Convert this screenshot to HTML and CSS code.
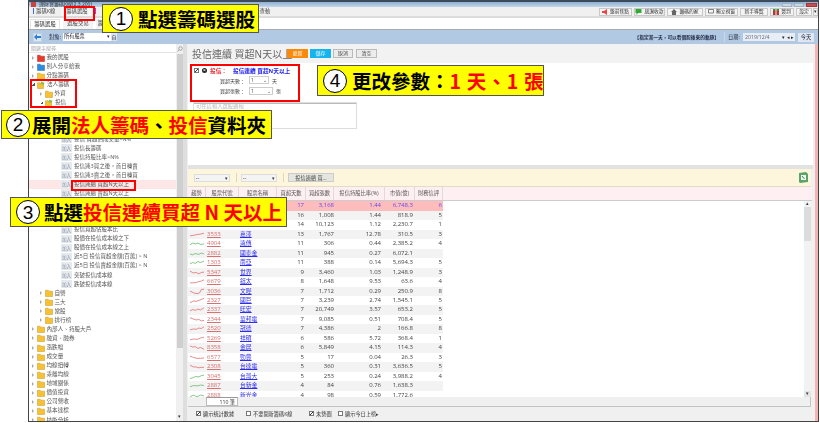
FILE: index.html
```html
<!DOCTYPE html>
<html lang="zh-Hant">
<head>
<meta charset="utf-8">
<title>籌碼選股</title>
<link rel="stylesheet" href="styles.css">
</head>
<body>
<svg class="defs" width="0" height="0">
  <symbol id="folder" viewBox="0 0 8 8"><path d="M.5 1.2h2.6l.8 1h3.6v5.3H.5z" fill="#f6c232" stroke="#c9952a" stroke-width=".5"/></symbol>
  <symbol id="openf" viewBox="0 0 8 8"><path d="M.5 1.8h2.4l.7.9h2.9v4.8H.5z" fill="#f6c232" stroke="#c9952a" stroke-width=".5"/><path d="M4 .5l3.5 1.2-1 2.4L3.4 3z" fill="#8cc152"/></symbol>
  <symbol id="redf" viewBox="0 0 8 8"><path d="M.5 1.2h2.6l.8 1h3.6v5.3H.5z" fill="#e8392c" stroke="#b52a20" stroke-width=".5"/></symbol>
  <symbol id="bluef" viewBox="0 0 8 8"><path d="M.5 1.2h2.6l.8 1h3.6v5.3H.5z" fill="#2f8be0" stroke="#2468a8" stroke-width=".5"/></symbol>
</svg>

<div class="window">
  <div class="titlebar">
    <i class="appicon"></i><span class="apptitle">理財寶籌碼K線(2.3.200)</span>
    <span class="winctl"><i class="wc"></i><i class="wc"></i><i class="wc close"></i></span>
  </div>

  <div class="tabs1">
    <span class="tab1"><b class="tick blue"></b>籌碼K線</span>
    <span class="tab1 on">籌碼選股</span>
    <span class="tab1 p"><b class="tick purple"></b></span>
    <span class="tab1 far">查動</span>
    <span class="spacer"></span>
    <span class="topbtn w32"><svg width="6" height="6" viewBox="0 0 6 6"><path d="M0 2h2l3-2v6L2 4H0z" fill="#e44"/></svg>盤前焦點</span>
    <span class="topbtn w31"><svg width="7" height="6" viewBox="0 0 7 6"><path d="M.5 0h6v4H3L1.500 6V4h-1z" fill="#3a3"/></svg>感謝收款</span>
    <span class="topbtn w36"><svg width="6" height="6" viewBox="0 0 6 6"><path d="M3 0l3 3H5v3H1V3H0z" fill="#666"/></svg>籌碼的家</span>
    <span class="topbtn w33"><svg width="6" height="5" viewBox="0 0 6 5"><path d="M.5.5h5v3.500h-5z" fill="none" stroke="#555" stroke-width=".7"/></svg>獨立視窗</span>
    <span class="topbtn w28">新手導覽</span>
    <span class="topbtn w23"><svg width="6" height="7" viewBox="0 0 6 7"><path d="M0 2h6v5H0z" fill="#b33"/><path d="M0 1h6v1.500H0z" fill="#393"/><path d="M2.500 1h1v6h-1z" fill="#eee"/></svg>簽到</span>
    <span class="topbtn w17">設定</span>
    <span class="topbtn w5">▾</span>
  </div>

  <div class="tabs2">
    <span class="tab2 on">籌碼選股</span>
    <span class="tab2">選股交易</span>
    <span class="tab2 short">籌碼</span>
  </div>

  <div class="bluebar">
    <span class="backbtn"><svg width="7" height="6" viewBox="0 0 7 6"><path d="M0 3l3-3v2h4v2H3v2z" fill="#2b7fd0"/></svg></span>
    <span class="lbl target">對象:</span>
    <span class="sel target-sel">所有股票<i>▾</i></span>
    <span class="selbtn">自</span>
    <span class="spacer"></span>
    <span class="hint">【指定某一天，可以看個股後來的軌跡】</span>
    <span class="vline"></span>
    <span class="lbl date">日期:</span>
    <span class="dateinput">2019/12/4<i>▾ ◂ ▸</i></span>
    <span class="today">今天</span>
  </div>

  <div class="body">
    <aside class="left">
      <div class="search"><span>關鍵字搜尋</span></div>
      <div class="searchicon"><svg width="6" height="6" viewBox="0 0 6 6"><circle cx="3.500" cy="2.500" r="1.800" fill="none" stroke="#888" stroke-width=".7"/><path d="M2 4L.5 5.500" stroke="#888" stroke-width=".7"/></svg></div>
      <div class="tree">
        <div class="t l0"><i class="arr"></i><svg class="fo"><use href="#redf"/></svg>我的選股</div>
        <div class="t l0"><i class="arr"></i><svg class="fo"><use href="#bluef"/></svg>別人分享給我</div>
        <div class="t l0"><i class="arr"></i><svg class="fo"><use href="#folder"/></svg>分點籌碼</div>
        <div class="t l0"><i class="arr open"></i><svg class="fo"><use href="#openf"/></svg>法人籌碼</div>
        <div class="t l1"><i class="arr"></i><svg class="fo"><use href="#folder"/></svg>外資</div>
        <div class="t l1"><i class="arr open"></i><svg class="fo"><use href="#openf"/></svg>投信</div>
        <div class="t"></div>
        <div class="t"></div>
        <div class="t"></div>
        <div class="t l2"><span class="add">加入</span>投信 買超佔成交量&gt;N%</div>
        <div class="t l2"><span class="add">加入</span>投信長籌碼</div>
        <div class="t l2"><span class="add">加入</span>投信持股比率&gt;N%</div>
        <div class="t l2"><span class="add">加入</span>投信連3買之後，首日轉賣</div>
        <div class="t l2"><span class="add">加入</span>投信連3賣之後，首日轉買</div>
        <div class="t l2 picked"><span class="add">加入</span>投信連續 買超N天以上</div>
        <div class="t l2"><span class="add">加入</span>投信連續 賣超N天以上</div>
        <div class="t"></div>
        <div class="t"></div>
        <div class="t"></div>
        <div class="t l2"><span class="add">加入</span>投信買超佔股本比</div>
        <div class="t l2"><span class="add">加入</span>股價在投信成本線之下</div>
        <div class="t l2"><span class="add">加入</span>股價在投信成本線之上</div>
        <div class="t l2"><span class="add">加入</span>近5日 投信買超金額[百萬] &gt; N</div>
        <div class="t l2"><span class="add">加入</span>近5日 投信賣超金額[百萬] &gt; N</div>
        <div class="t l2"><span class="add">加入</span>突破投信成本線</div>
        <div class="t l2"><span class="add">加入</span>跌破投信成本線</div>
        <div class="t l1"><i class="arr"></i><svg class="fo"><use href="#folder"/></svg>自營</div>
        <div class="t l1"><i class="arr"></i><svg class="fo"><use href="#folder"/></svg>三大</div>
        <div class="t l1"><i class="arr"></i><svg class="fo"><use href="#folder"/></svg>當股</div>
        <div class="t l1"><i class="arr"></i><svg class="fo"><use href="#folder"/></svg>排行榜</div>
        <div class="t l0"><i class="arr"></i><svg class="fo"><use href="#folder"/></svg>內部人、持股大戶</div>
        <div class="t l0"><i class="arr"></i><svg class="fo"><use href="#folder"/></svg>融資、融券</div>
        <div class="t l0"><i class="arr"></i><svg class="fo"><use href="#folder"/></svg>漲跌幅</div>
        <div class="t l0"><i class="arr"></i><svg class="fo"><use href="#folder"/></svg>成交量</div>
        <div class="t l0"><i class="arr"></i><svg class="fo"><use href="#folder"/></svg>均線扭轉</div>
        <div class="t l0"><i class="arr"></i><svg class="fo"><use href="#folder"/></svg>乖離均線</div>
        <div class="t l0"><i class="arr"></i><svg class="fo"><use href="#folder"/></svg>地域關係</div>
        <div class="t l0"><i class="arr"></i><svg class="fo"><use href="#folder"/></svg>價值投資</div>
        <div class="t l0"><i class="arr"></i><svg class="fo"><use href="#folder"/></svg>公司營收</div>
        <div class="t l0"><i class="arr"></i><svg class="fo"><use href="#folder"/></svg>基本達標</div>
        <div class="t l0"><i class="arr"></i><svg class="fo"><use href="#folder"/></svg>技術分析</div>
      </div>
      <div class="vscroll"><b class="thumb"></b><i class="sdown">▾</i></div>
    </aside>
    <div class="splitter"></div>

    <main class="main">
      <div class="head">
        <span class="title">投信連續 買超N天以上</span>
        <span class="hbtn orange">更新</span>
        <span class="hbtn sky">儲存</span>
        <span class="hbtn grey c">取消</span>
        <span class="hbtn grey d">清空</span>
      </div>

      <div class="params">
        <div class="prow1">
          <i class="chk on"></i><i class="xmark">×</i><span class="pred">投信：</span><span class="pblue">投信連續 買超N天以上</span>
        </div>
        <div class="prow"><span>買超天數：</span><span class="psel a">1<i>⌄</i></span><span>天</span></div>
        <div class="prow"><span>買超張數：</span><span class="psel b">1<i>⌄</i></span><span>張</span></div>
        <div class="logic">可在這輸入選股邏輯</div>
      </div>

      <div class="band"></div>

      <div class="cream">
        <span class="dsel">--<i>▾</i></span>
        <span class="cdiv"></span>
        <span class="dsel">--<i>▾</i></span>
        <span class="cdiv"></span>
        <span class="cbtn">投信連續 買...</span>
        <span class="spacer"></span>
        <svg class="xls" width="10" height="11" viewBox="0 0 10 11"><path d="M1 1l7-1 2 2v8l-8 1-1-1z" fill="#5aa469"/><path d="M3 3h5v5H3z" fill="#eef6ee"/><path d="M4 4l2.500 3" stroke="#2f7a3e" stroke-width=".9"/></svg>
      </div>

      <div class="thead">
        <span>趨勢</span><span>股票代號</span><span>股票名稱</span><span>買超天數</span><span>買超張數</span><span>投信持股比率(%)</span><span>市值(億)</span><span>財務信評</span>
      </div>

      <div class="tbody">
        <div class="rows">
          <div class="r first"><span></span><span></span><span></span><span class="n">17</span><span class="n">3,168</span><span class="n">1.44</span><span class="n">6,748.3</span><span class="n">6</span></div>
          <div class="r"><span></span><span></span><span></span><span class="n">16</span><span class="n">1,008</span><span class="n">1.44</span><span class="n">818.9</span><span class="n">5</span></div>
          <div class="r"><span></span><span></span><span></span><span class="n">14</span><span class="n">10,123</span><span class="n">1.12</span><span class="n">2,230.7</span><span class="n">1</span></div>
          <div class="r"><span><svg class="sp up" viewBox="0 0 16 7"><polyline points="0,5 4,4.500 8,3.500 12,3 16,2"/></svg></span><span class="code">3533</span><span class="name">嘉澤</span><span class="n">13</span><span class="n">1,767</span><span class="n">12.78</span><span class="n">310.5</span><span class="n">3</span></div>
          <div class="r"><span><svg class="sp gr" viewBox="0 0 16 7"><polyline points="0,5 3,3 6,4 9,3 12,4.500 16,4"/></svg></span><span class="code">4904</span><span class="name">遠傳</span><span class="n">11</span><span class="n">306</span><span class="n">0.44</span><span class="n">2,385.2</span><span class="n">4</span></div>
          <div class="r"><span><svg class="sp gr" viewBox="0 0 16 7"><polyline points="0,4 3,5 6,3.500 10,4.500 13,3 16,4"/></svg></span><span class="code">2882</span><span class="name">國泰金</span><span class="n">11</span><span class="n">945</span><span class="n">0.27</span><span class="n">6,072.1</span><span></span></div>
          <div class="r"><span><svg class="sp gr" viewBox="0 0 16 7"><polyline points="0,5 3,3.500 6,4.500 9,2.500 12,3.500 16,2"/></svg></span><span class="code">1303</span><span class="name">南亞</span><span class="n">11</span><span class="n">388</span><span class="n">0.14</span><span class="n">5,694.3</span><span class="n">5</span></div>
          <div class="r"><span><svg class="sp up" viewBox="0 0 16 7"><polyline points="0,2 4,4 7,3.500 10,5 13,3.500 16,3"/></svg></span><span class="code">5347</span><span class="name">世界</span><span class="n">9</span><span class="n">3,460</span><span class="n">1.03</span><span class="n">1,248.9</span><span class="n">3</span></div>
          <div class="r"><span><svg class="sp up" viewBox="0 0 16 7"><polyline points="0,5 5,5 9,4 13,3 16,1.500"/></svg></span><span class="code">6679</span><span class="name">鈺太</span><span class="n">8</span><span class="n">1,648</span><span class="n">9.53</span><span class="n">63.6</span><span class="n">4</span></div>
          <div class="r"><span><svg class="sp up" viewBox="0 0 16 7"><polyline points="0,3 4,5 8,6 11,5 13,1 16,1"/></svg></span><span class="code">3036</span><span class="name">文曄</span><span class="n">7</span><span class="n">1,712</span><span class="n">0.29</span><span class="n">250.9</span><span class="n">8</span></div>
          <div class="r"><span><svg class="sp up" viewBox="0 0 16 7"><polyline points="0,6 4,4 7,4.500 11,3 16,1"/></svg></span><span class="code">2327</span><span class="name">國巨</span><span class="n">7</span><span class="n">3,239</span><span class="n">2.74</span><span class="n">1,545.1</span><span class="n">5</span></div>
          <div class="r"><span><svg class="sp up" viewBox="0 0 16 7"><polyline points="0,5 3,3.500 6,4.500 9,3 12,4 16,1.500"/></svg></span><span class="code">2337</span><span class="name">旺宏</span><span class="n">7</span><span class="n">20,749</span><span class="n">3.57</span><span class="n">653.2</span><span class="n">5</span></div>
          <div class="r"><span><svg class="sp up" viewBox="0 0 16 7"><polyline points="0,1.500 4,3 7,4 10,3.500 13,5 16,4.500"/></svg></span><span class="code">2344</span><span class="name">華邦電</span><span class="n">7</span><span class="n">9,085</span><span class="n">0.51</span><span class="n">708.4</span><span class="n">5</span></div>
          <div class="r"><span><svg class="sp up" viewBox="0 0 16 7"><polyline points="0,5 4,4 7,4.500 10,3 13,3.500 16,1.500"/></svg></span><span class="code">2520</span><span class="name">冠德</span><span class="n">7</span><span class="n">4,386</span><span class="n">2</span><span class="n">166.8</span><span class="n">8</span></div>
          <div class="r"><span><svg class="sp up" viewBox="0 0 16 7"><polyline points="0,5 4,4 8,4.500 12,3 16,2"/></svg></span><span class="code">5269</span><span class="name">祥碩</span><span class="n">6</span><span class="n">586</span><span class="n">5.72</span><span class="n">368.4</span><span class="n">1</span></div>
          <div class="r"><span><svg class="sp up" viewBox="0 0 16 7"><polyline points="0,1.500 3,3 6,2.500 9,4.500 12,3.500 16,5.500"/></svg></span><span class="code">8358</span><span class="name">金居</span><span class="n">6</span><span class="n">5,849</span><span class="n">4.15</span><span class="n">114.3</span><span class="n">4</span></div>
          <div class="r"><span><svg class="sp up" viewBox="0 0 16 7"><polyline points="0,2 4,3.500 8,4.500 12,4.500 16,4"/></svg></span><span class="code">6577</span><span class="name">勁豐</span><span class="n">5</span><span class="n">17</span><span class="n">0.04</span><span class="n">26.3</span><span class="n">3</span></div>
          <div class="r"><span><svg class="sp up" viewBox="0 0 16 7"><polyline points="0,2 4,4 7,4 10,5 13,4.500 16,4.500"/></svg></span><span class="code">2308</span><span class="name">台達電</span><span class="n">5</span><span class="n">360</span><span class="n">0.31</span><span class="n">3,636.5</span><span class="n">5</span></div>
          <div class="r"><span><svg class="sp gr" viewBox="0 0 16 7"><polyline points="0,6 4,4.500 7,3.500 10,4 13,2.500 16,2"/></svg></span><span class="code">3045</span><span class="name">台灣大</span><span class="n">5</span><span class="n">253</span><span class="n">0.24</span><span class="n">3,988.2</span><span class="n">4</span></div>
          <div class="r"><span><svg class="sp gr" viewBox="0 0 16 7"><polyline points="0,5 4,3.500 8,4 12,3 16,3.500"/></svg></span><span class="code">2887</span><span class="name">台新金</span><span class="n">4</span><span class="n">84</span><span class="n">0.76</span><span class="n">1,638.3</span><span></span></div>
          <div class="r"><span><svg class="sp gr" viewBox="0 0 16 7"><polyline points="0,5 4,3 8,5 12,3 16,4"/></svg></span><span class="code">2888</span><span class="name">新光金</span><span class="n">4</span><span class="n">98</span><span class="n">0.59</span><span class="n">1,772.6</span><span></span></div>
        </div>
        <div class="tscroll"><i>▴</i><b class="tthumb"></b><i class="bot">▾</i></div>
      </div>

      <div class="count"><span class="countbox">110 筆</span></div>
      <div class="checks">
        <span class="ck a"><i class="chk on"></i>顯示統計數據</span>
        <span class="ck b"><i class="chk"></i>不要開新籌碼K線</span>
        <span class="ck c"><i class="chk on"></i>未勢圖</span>
        <span class="ck d"><i class="chk"></i>顯示今日上榜▸</span>
      </div>
    </main>
    <div class="edge"></div>
  </div>
</div>

<div class="mark m-tab"></div>
<div class="mark m-tree"></div>
<div class="mark m-item"></div>
<div class="mark m-param"></div>

<div class="call c1"><span class="num">1</span><span>點選籌碼選股</span></div>
<div class="call c2"><span class="num">2</span><span>展開<em>法人籌碼</em>、<em>投信</em>資料夾</span></div>
<div class="call c3"><span class="num">3</span><span>點選<em>投信連續買超 N 天以上</em></span></div>
<div class="call c4"><span class="num">4</span><span>更改參數：<em class="wide">1 天、1 張</em></span></div>
</body>
</html>
```

FILE: styles.css
```css
* { box-sizing: border-box; }
html, body { margin: 0; padding: 0; }
body {
  width: 820px; height: 423px; overflow: hidden; background: #fff; position: relative;
  font-family: "Open Sans", "Noto Sans CJK TC", sans-serif;
  font-size: 5.2px; color: #444;
}
.defs { position: absolute; }
i { font-style: normal; }
.spacer { flex: 1; }

.window {
  margin-left: 28px; width: 791px; height: 422px;
  border: 1px solid #444; border-top: 2px solid #3c4a5c;
  display: flex; flex-direction: column; overflow: hidden; background: #f0f0f0;
  filter: blur(.2px);
}
.titlebar { height: 5px; background: linear-gradient(#8fb0d4, #c3d6ea); display: flex; align-items: center; padding-left: 2px; font-size: 5px; color: #333; line-height: 5px; white-space: nowrap; }
.appicon { width: 5px; height: 5px; background: #c8443c; margin-right: 3px; }
.winctl { margin-left: auto; display: flex; gap: 2px; padding-right: 1px; }
.wc { width: 10px; height: 4px; background: #c9d6e4; border: 1px solid #9fb2c6; }
.wc.close { width: 11px; background: #c85050; border-color: #a33; }

.tabs1 { height: 11px; background: #f0f0f0; display: flex; align-items: center; border-bottom: 2px solid #dcdcdc; font-size: 5.4px; white-space: nowrap; }
.tab1 { height: 9px; line-height: 9px; margin-left: 4px; white-space: nowrap; }
.tab1.on { margin-left: 6px; width: 31px; text-align: center; background: #f6f6f6; }
.tab1.p { margin-left: 3px; }
.tab1.far { margin-left: 161px; }
.tick { display: inline-block; width: 1px; height: 6px; margin-right: 2px; vertical-align: -1px; }
.tick.blue { background: #3a6ee0; }
.tick.purple { background: #a040e0; }
.topbtn { height: 8px; line-height: 7px; background: #f4f4f4; border: 1px solid #c8c8c8; margin-left: 2px; display: flex; align-items: center; justify-content: center; gap: 2px; white-space: nowrap; color: #333; font-size: 4.800px; }
.w32 { width: 33px; } .w31 { width: 31px; } .w36 { width: 36px; } .w33 { width: 33px; } .w28 { width: 28px; } .w23 { width: 24px; } .w17 { width: 16px; } .w5 { width: 5px; margin-left: 1px; }

.tabs2 { height: 12px; background: #fff; display: flex; align-items: flex-end; border-bottom: 1px solid #aaa; padding-left: 1px; font-size: 5.400px; }
.tab2 { height: 10px; line-height: 9px; width: 30px; text-align: center; margin-right: 3px; background: #f4f4f4; color: #444; white-space: nowrap; }
.tab2.on { background: #fff; color: #333; border: 1px solid #e4e4e4; border-bottom: 0; line-height: 8px; }
.tab2.short { width: 14px; }

.bluebar { height: 14px; background: #b2c9e3; display: flex; align-items: center; padding-left: 4px; color: #223; white-space: nowrap; }
.backbtn { width: 9px; height: 9px; background: #dde7f2; border: 1px solid #c4d2e2; display: flex; align-items: center; justify-content: center; }
.lbl.target { margin-left: 7px; width: 14px; }
.lbl.date { width: 12px; }
.sel { width: 48px; height: 8px; line-height: 7px; background: #fff; padding-left: 1px; display: flex; justify-content: space-between; padding-right: 1px; }
.selbtn { width: 6px; height: 8px; line-height: 8px; background: #dfe8f2; font-size: 5px; text-align: center; }
.hint { font-size: 4.700px; color: #1c2540; font-weight: 700; white-space: nowrap; }
.vline { width: 1px; height: 10px; background: #c8d8e8; margin: 0 3px 0 5px; }
.dateinput { width: 52px; height: 8px; line-height: 8px; background: #e8eef6; margin: 0 3px; padding-left: 2px; display: flex; justify-content: space-between; color: #667; }
.dateinput i { font-size: 5px; color: #222; padding-right: 1px; }
.today { width: 16px; height: 9px; line-height: 9px; text-align: center; background: #dfe8f2; margin-right: 4px; }

.body { flex: 1; display: grid; grid-template-columns: 154px 4px 626px 5px; min-height: 0; }
.left { display: grid; grid-template-columns: 147px 7px; grid-template-rows: 9px 1fr; background: #fff; min-height: 0; overflow: hidden; }
.search { color: #aaa; padding-left: 2px; line-height: 8px; font-size: 5px; border-bottom: 1px solid #e4e4e4; }
.searchicon { background: #eee; display: flex; align-items: center; justify-content: center; }
.tree { overflow: hidden; min-height: 0; background: #fff; }
.t { height: 9.070px; line-height: 9px; white-space: nowrap; display: flex; align-items: center; color: #555; font-size: 5.600px; }
.l0 { padding-left: 3px; }
.l1 { padding-left: 11px; }
.l2 { padding-left: 32px; font-size: 5.500px; }
.arr { width: 0; height: 0; margin-right: 2.500px; border-left: 2.500px solid #aaa; border-top: 2px solid transparent; border-bottom: 2px solid transparent; }
.arr.open { border: 0; width: 3px; height: 3px; background: linear-gradient(135deg, transparent 50%, #555 50%); margin-right: 2px; }
.fo { width: 8px; height: 8px; margin-right: 2px; }
.add { width: 11px; height: 8px; line-height: 8px; background: #e6eaee; color: #8a97a8; font-size: 4.600px; text-align: center; margin-right: 2px; }
.picked { background: #fde6e6; }
.vscroll { background: #f0f0f0; display: flex; flex-direction: column; justify-content: space-between; align-items: center; }
.thumb { display: block; width: 6px; height: 294px; background: #cfcfcf; margin-top: 1px; }
.sdown { font-size: 5px; line-height: 5px; color: #333; margin-bottom: 2px; }
.splitter { background: #dedede; }

.main { background: #f0f0f0; display: flex; flex-direction: column; min-width: 0; padding-left: 1px; }
.head { height: 19px; display: flex; align-items: center; background: #f2f2f2; }
.title { font-size: 10px; color: #666; margin-left: 4px; width: 95px; white-space: nowrap; }
.hbtn { height: 9px; line-height: 9px; font-size: 5px; text-align: center; width: 21px; margin-right: 2px; }
.orange { background: #f98a0c; color: #fff; }
.sky { background: #14b4ee; color: #fff; }
.grey { background: #ececec; border: 1px solid #bbb; line-height: 7px; color: #444; }
.grey.c { width: 20px; margin-right: 3px; }
.params { height: 102px; background: #fff; padding: 1px 0 0 6px; }
.prow1 { height: 10px; display: flex; align-items: center; margin-top: 1px; font-weight: 700; font-size: 5.700px; white-space: nowrap; }
.chk { display: inline-block; width: 5px; height: 5px; border: 1px solid #777; background: #fff; position: relative; flex: none; }
.chk.on::after { content: ""; position: absolute; left: 0; top: 0; width: 3px; height: 3px; background: linear-gradient(135deg, transparent 40%, #333 40%, #333 60%, transparent 60%); }
.xmark { width: 5px; height: 5px; border-radius: 50%; background: #222; color: #fff; font-size: 5px; line-height: 5px; text-align: center; margin: 0 3px 0 3px; }
.pred { color: #e8272f; width: 23px; }
.pblue { color: #2222ee; white-space: nowrap; }
.prow { height: 10.500px; display: flex; align-items: center; padding-left: 26px; color: #444; font-size: 5px; }
.prow span:first-child { width: 29px; white-space: nowrap; }
.psel { height: 8px; line-height: 7px; border: 1px solid #ccc; display: flex; justify-content: space-between; padding: 0 1px; margin-right: 3px; background: #fff; }
.psel.a { width: 20px; }
.psel.b { width: 24px; }
.logic { width: 164px; height: 27px; border: 1px solid #ddd; margin: 6px 0 0 -1px; color: #bbb; padding-left: 2px; line-height: 7px; font-size: 5.300px; box-shadow: inset 0 1px #bbb; }
.band { height: 4px; background: #e2e2e2; }
.cream { height: 18px; background: #fdf6dc; display: flex; align-items: center; padding-left: 6px; padding-right: 2px; margin-right: 2px; border-bottom: 1px solid #e2ddc8; }
.dsel { width: 36px; height: 8px; line-height: 7px; background: #f4f4f4; border: 1px solid #ddd; display: flex; justify-content: space-between; padding: 0 1px; color: #333; }
.cdiv { width: 1px; height: 9px; background: #d8d8c8; margin: 0 4px 0 6px; }
.cbtn { width: 46px; height: 9px; line-height: 8px; background: #e6e6e0; border: 1px solid #ccc; text-align: center; white-space: nowrap; overflow: hidden; }
.xls { margin-right: 1px; }

.thead, .r { display: grid; grid-template-columns: 18px 33px 38px 29px 28px 51px 30px 28px; width: 255px; }
.thead { height: 14px; width: 624px; background: #fdeff2; border-bottom: 1px solid #ccc; align-items: stretch; }
.thead span { line-height: 13px; text-align: center; border-right: 1px solid #e0dadc; white-space: nowrap; overflow: hidden; font-size: 5.300px; color: #555; }
.tbody { height: 196px; margin-right: 2px; background: #fff; display: flex; overflow: hidden; }
.rows { width: 617px; height: 196px; padding-top: .300px; overflow: hidden; }
.r { height: 9.470px; line-height: 9.470px; font-size: 6px; color: #444; }
.r:nth-child(even) { background: #f3f3f3; }
.r.first { background: #ffbcbc; color: #5a4cf0; }
.n { text-align: right; padding-right: 1px; }
.n:nth-child(4) { padding-right: 2px; }
.n:nth-child(5) { padding-right: 0; }
.n:nth-child(6) { padding-right: 4px; }
.n:nth-child(7) { padding-right: 2px; }
.code { color: #d97070; text-decoration: underline; padding-left: 1px; }
.name { color: #2c2cf0; text-decoration: underline; padding-left: 1px; font-size: 5.800px; }
.sp { width: 14px; height: 7px; margin: 1px 0 0 2px; display: block; }
.sp polyline { fill: none; stroke-width: .8; }
.sp.up polyline { stroke: #e45a5a; }
.sp.gr polyline { stroke: #58b058; }
.tscroll { width: 7px; background: #f2f2f2; display: flex; flex-direction: column; font-size: 5px; line-height: 5px; text-align: center; color: #333; }
.tthumb { display: block; height: 34px; background: #dcdcdc; margin: 1px 0; }
.tscroll .bot { margin-top: auto; background: #e4e4e4; height: 6px; }
.count { height: 10px; margin-right: 2px; border-bottom: 1px solid #c4c4c4; border-right: 1px solid #c4c4c4; background: #f0f0f0; padding-left: 18px; }
.countbox { display: block; width: 32px; height: 9px; line-height: 8px; background: #fff; border: 1px solid #bbb; border-top: 1px solid #999; text-align: right; padding-right: 2px; color: #333; }
.checks { height: 11px; display: flex; align-items: center; padding-top: 2px; }
.ck { display: flex; align-items: center; gap: 2px; white-space: nowrap; color: #333; }
.ck.a { margin-left: 8px; width: 50px; }
.ck.b { width: 63px; }
.ck.c { width: 29px; }
.edge { background: linear-gradient(90deg, #f0f0f0 0 2px, #f4b4b4 2px); }

.mark { position: absolute; border: 2px solid #f00; }
.m-tab { left: 64px; top: 6px; width: 31px; height: 15px; }
.m-tree { left: 30px; top: 79px; width: 47px; height: 29px; }
.m-item { left: 71px; top: 180px; width: 65px; height: 11px; }
.m-param { left: 190px; top: 64px; width: 110px; height: 38px; }

.call {
  position: absolute; background: #ff0; border: 1px solid #555;
  display: flex; align-items: center;
  font-family: "Noto Sans CJK TC", sans-serif; font-weight: 700; font-size: 19.500px; color: #000;
  white-space: nowrap; line-height: 1;
}
.call em { font-style: normal; color: #f00; }
.num { width: 24px; height: 24px; border-radius: 50%; background: #fff; border: 1.200px solid #000; font-family: "Liberation Sans", sans-serif; font-weight: 400; font-size: 19px; display: flex; align-items: center; justify-content: center; flex: none; }
.c1 { left: 102px; top: 4px; width: 157px; height: 29px; padding-left: 6px; gap: 5px; }
.c2 { left: 1px; top: 110px; width: 271px; height: 29px; padding-left: 4px; gap: 2px; }
.c3 { left: 10px; top: 197px; width: 277px; height: 30px; padding-left: 5px; gap: 4px; }
.c4 { left: 317px; top: 65px; width: 227px; height: 31px; padding-left: 5px; gap: 5px; }
.wide { letter-spacing: .6px; }
```
